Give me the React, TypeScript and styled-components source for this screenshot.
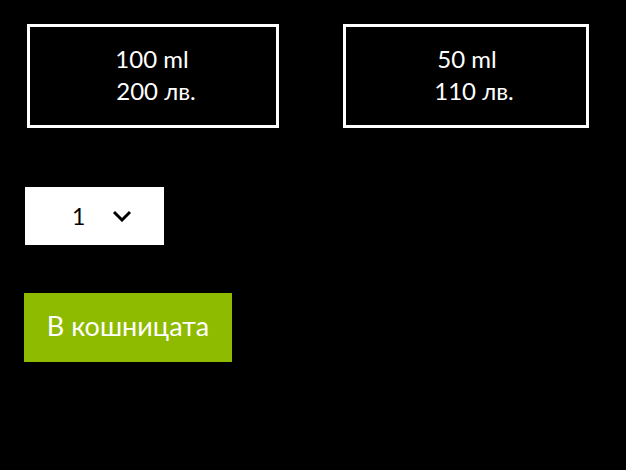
import styled, { createGlobalStyle } from 'styled-components';

const Global = createGlobalStyle`
  html, body {
    margin: 0;
    background: #000;
    color: #fff;
    font-family: Lato, "Open Sans", sans-serif;
  }
`;

const Page = styled.div`
  padding: 24px 0 0 24px;
  display: flex;
  flex-direction: column;
  align-items: flex-start;
`;

const Options = styled.div`
  display: flex;
  gap: 64px;
  padding-left: 3px;
`;

const Option = styled.div<{ w: number }>`
  box-sizing: border-box;
  width: ${(p) => p.w}px;
  height: 104px;
  border: 3px solid #fff;
  display: flex;
  flex-direction: column;
  justify-content: center;
  align-items: center;
  font-size: 24px;
  line-height: 32px;
  padding-bottom: 2px;
`;

const Line = styled.span<{ shift?: number }>`
  margin-left: ${(p) => p.shift || 0}px;
`;

const Select = styled.div`
  margin-top: 59px;
  margin-left: 1px;
  width: 139px;
  height: 58px;
  background: #fff;
  color: #000;
  display: flex;
  align-items: center;
  font-size: 23px;
  padding-left: 47px;
  box-sizing: border-box;
  gap: 27px;
`;

const Button = styled.button`
  margin-top: 48px;
  width: 208px;
  height: 69px;
  border: none;
  background: #8eba00;
  color: #fff;
  font-family: Lato, "Open Sans", sans-serif;
  font-size: 27px;
  padding: 0 0 4px 0;
`;

export default function App() {
  return (
    <>
      <Global />
      <Page>
        <Options>
          <Option w={252}>
            <Line shift={-2}>100 ml</Line>
            <Line shift={6}>200 лв.</Line>
          </Option>
          <Option w={246}>
            <Line shift={2}>50 ml</Line>
            <Line shift={16}>110 лв.</Line>
          </Option>
        </Options>
        <Select>
          <span>1</span>
          <svg width="20" height="12" viewBox="0 0 20 12">
            <path d="M2 2 L10 10 L18 2" stroke="#000" strokeWidth="3" fill="none" />
          </svg>
        </Select>
        <Button>В кошницата</Button>
      </Page>
    </>
  );
}
